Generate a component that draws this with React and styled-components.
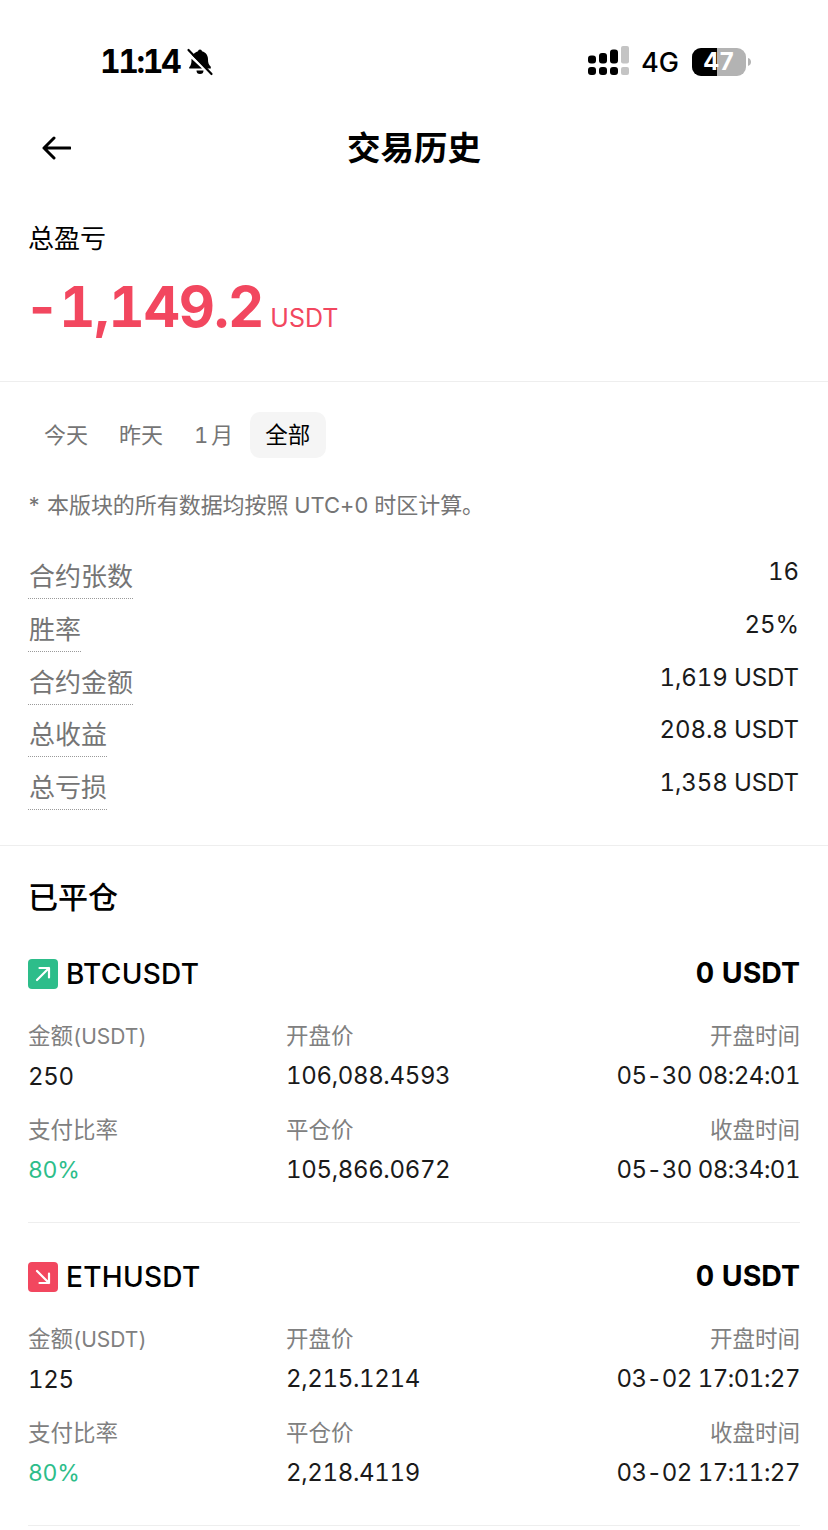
import React from 'react';
import styled, { createGlobalStyle } from 'styled-components';

const Global = createGlobalStyle`
  html, body {
    margin: 0;
    padding: 0;
    background: #fff;
  }
  body {
    font-family: "Inter", "Noto Sans CJK SC", sans-serif;
    font-variant-numeric: tabular-nums;
    color: #000;
  }
`;

const Page = styled.div`
  width: 828px;
  height: 1530px;
  overflow: hidden;
  background: #fff;
`;

const StatusBar = styled.div`
  height: 62px;
  padding-top: 40px;
  display: flex;
  align-items: flex-start;
  justify-content: space-between;
  padding-left: 100px;
  padding-right: 76px;
`;

const StatusLeft = styled.div`
  display: flex;
  align-items: center;
  gap: 6px;
  height: 44px;
`;

const Clock = styled.span`
  font-size: 32px;
  font-weight: 700;
  line-height: 44px;
  letter-spacing: -2.4px;
`;

const StatusRight = styled.div`
  display: flex;
  align-items: center;
  height: 44px;
`;

const Network = styled.span`
  font-size: 27px;
  font-weight: 500;
  margin: 0 13px 0 9px;
`;

const Header = styled.div`
  height: 70px;
  margin-top: 11px;
  display: grid;
  grid-template-columns: 1fr auto 1fr;
  align-items: center;
  padding: 0 39px;
`;

const Title = styled.div`
  font-size: 33.5px;
  font-weight: 700;
  line-height: 70px;
`;

const Summary = styled.div`
  padding: 38px 28px 0;
  height: 160px;
  border-bottom: 1px solid #eeeeee;
`;

const SummaryLabel = styled.div`
  font-size: 26px;
  line-height: 36px;
`;

const Pnl = styled.div`
  display: flex;
  align-items: baseline;
  gap: 7px;
  color: #f2475f;
  margin-top: 18px;
`;

const PnlValue = styled.span`
  font-size: 56px;
  font-weight: 700;
  line-height: 64px;
  letter-spacing: -1px;
  margin-left: -4px;
`;

const PnlUnit = styled.span`
  font-size: 25px;
`;

const Tabs = styled.div`
  display: flex;
  align-items: center;
  padding: 30px 0 0 30px;
`;

const Tab = styled.div`
  padding: 0 ${p => (p.$active ? 15.5 : 14)}px;
  height: 46px;
  margin-right: ${p => (p.$tight ? 4 : 3)}px;
  border-radius: 10px;
  font-size: ${p => (p.$active ? 22.5 : 22)}px;
  line-height: 46px;
  letter-spacing: ${p => (p.$tight ? -1.5 : 0)}px;
  color: ${p => (p.$active ? '#000' : '#757575')};
  background: ${p => (p.$active ? '#f5f5f5' : 'transparent')};
`;

const Note = styled.div`
  margin: 30px 28px 0 27px;
  font-size: 22px;
  line-height: 34px;
  letter-spacing: -0.06px;
  color: #757575;
`;

const Stats = styled.div`
  margin-top: 35px;
  padding: 0 29px 0 28px;
  display: flex;
  flex-direction: column;
  gap: 10px;
  height: 289px;
  box-sizing: border-box;
  border-bottom: 1px solid #eeeeee;
`;

const StatRow = styled.div`
  display: flex;
  justify-content: space-between;
  align-items: flex-start;
  height: 42.75px;
`;

const StatLabel = styled.span`
  font-size: 26px;
  line-height: 39px;
  padding: 0 0 2px 1px;
  color: #757575;
  border-bottom: 1px dotted #9a9a9a;
`;

const StatValue = styled.span`
  font-size: 24px;
  line-height: 30px;
  letter-spacing: -0.1px;
  color: #1a1a1a;
`;

const Closed = styled.div`
  padding: 0 28px;
`;

const ClosedTitle = styled.div`
  font-size: 30px;
  font-weight: 500;
  line-height: 40px;
  padding: 31px 0 3px;
`;

const Trade = styled.div`
  border-bottom: 1px solid #eeeeee;
  height: 303px;
  box-sizing: border-box;
  padding-top: 39px;
`;

const TradeHead = styled.div`
  display: flex;
  align-items: center;
  justify-content: space-between;
  height: 30px;
`;

const Pair = styled.div`
  display: flex;
  align-items: center;
  gap: 8px;
  font-size: 28px;
  font-weight: 500;
  letter-spacing: 0.3px;
`;

const Direction = styled.span`
  width: 30px;
  height: 30px;
  border-radius: 4px;
  background: ${p => (p.$up ? '#2dbd8a' : '#f2475f')};
  display: flex;
  align-items: center;
  justify-content: center;
`;

const Profit = styled.div`
  font-size: 28.5px;
  font-weight: 700;
  padding-bottom: 3px;
`;

const Grid = styled.div`
  display: grid;
  grid-template-columns: 258px 1fr 1fr;
  grid-auto-rows: 94px;
  margin-top: 30px;
`;

const Cell = styled.div`
  text-align: ${p => (p.$right ? 'right' : 'left')};
`;

const CellLabel = styled.div`
  font-size: 22.5px;
  line-height: 34px;
  color: #808080;
`;

const LabelUnit = styled.span`
  font-size: 21px;
`;

const CellValue = styled.div`
  font-size: ${p => (p.$green ? 23 : 24)}px;
  line-height: 34px;
  margin-top: 6px;
  letter-spacing: ${p => (p.$time ? -0.5 : -0.35)}px;
  color: ${p => (p.$green ? '#2dbd8a' : '#1a1a1a')};
`;

const MutedBell = () => (
  <svg width="30" height="32" viewBox="0 0 30 30">
    <path d="M15 2.500a2 2 0 0 1 2 1.800c4 1 6 4.300 6 8.200 0 3.500.8 5.300 2.800 7.300v1.700H21L7.300 8.500C8.500 6.900 10.700 4.800 13 4.300a2 2 0 0 1 2-1.800zM6.500 11.800l10.500 9.700H4.200v-1.200c1.600-1.700 2.300-3.800 2.300-7.300zM11.500 23.500h7a3.500 3.500 0 0 1-7 0z" fill="#000" />
    <path d="M3.500 3l23 24" stroke="#000" strokeWidth="2.200" strokeLinecap="round" />
  </svg>
);

const SignalDots = () => (
  <svg width="44" height="32" viewBox="0 0 44 32">
    <rect x="0" y="9.500" width="8" height="8" rx="3" fill="#000" />
    <rect x="11" y="7" width="8" height="10.500" rx="3" fill="#000" />
    <rect x="22" y="3.500" width="8" height="14" rx="3" fill="#000" />
    <rect x="33" y="0" width="8" height="17.500" rx="2" fill="#c4c4c4" />
    <rect x="0" y="21" width="8" height="8" rx="3" fill="#000" />
    <rect x="11" y="21" width="8" height="8" rx="3" fill="#000" />
    <rect x="22" y="21" width="8" height="8" rx="3" fill="#000" />
    <rect x="33" y="21" width="8" height="8" rx="2" fill="#c4c4c4" />
  </svg>
);

const BatteryWrap = styled.div`
  position: relative;
  width: 60px;
  height: 28px;
`;

const BatteryText = styled.span`
  position: absolute;
  left: 0;
  width: 54px;
  top: 0;
  text-align: center;
  font-size: 24px;
  font-weight: 700;
  line-height: 28px;
  color: #fff;
`;

const Battery = () => (
  <BatteryWrap>
    <svg width="60" height="28" viewBox="0 0 60 28">
      <rect x="0" y="0" width="54" height="28" rx="9" fill="#b3b3b3" />
      <path d="M9 0h16v28H9a9 9 0 0 1-9-9V9a9 9 0 0 1 9-9z" fill="#000" />
      <path d="M56 10c2 .6 3 2.200 3 4s-1 3.400-3 4z" fill="#b3b3b3" />
    </svg>
    <BatteryText>47</BatteryText>
  </BatteryWrap>
);

const BackArrow = () => (
  <svg width="32" height="32" viewBox="0 0 32 32" fill="none" stroke="#000" strokeWidth="3" strokeLinecap="round" strokeLinejoin="round">
    <path d="M31 16H5M15 6L5 16l10 10" />
  </svg>
);

const UpArrow = () => (
  <svg width="20" height="20" viewBox="0 0 20 20" fill="none" stroke="#fff" strokeWidth="2.200" strokeLinecap="round" strokeLinejoin="round">
    <path d="M4 16L16 4M6.500 4H16v9.500" />
  </svg>
);

const DownArrow = () => (
  <svg width="20" height="20" viewBox="0 0 20 20" fill="none" stroke="#fff" strokeWidth="2.200" strokeLinecap="round" strokeLinejoin="round">
    <path d="M4 4l12 12M16 6.500V16H6.500" />
  </svg>
);

const stats = [
  ['合约张数', '16'],
  ['胜率', '25%'],
  ['合约金额', '1,619 USDT'],
  ['总收益', '208.8 USDT'],
  ['总亏损', '1,358 USDT'],
];

const trades = [
  {
    pair: 'BTCUSDT', up: true, amount: '250', open: '106,088.4593', close: '105,866.0672',
    openAt: '05-30 08:24:01', closeAt: '05-30 08:34:01',
  },
  {
    pair: 'ETHUSDT', up: false, amount: '125', open: '2,215.1214', close: '2,218.4119',
    openAt: '03-02 17:01:27', closeAt: '03-02 17:11:27',
  },
];

export default function App() {
  return (
    <Page>
      <Global />
      <StatusBar>
        <StatusLeft>
          <Clock>11:14</Clock>
          <MutedBell />
        </StatusLeft>
        <StatusRight>
          <SignalDots />
          <Network>4G</Network>
          <Battery />
        </StatusRight>
      </StatusBar>
      <Header>
        <BackArrow />
        <Title>交易历史</Title>
      </Header>
      <Summary>
        <SummaryLabel>总盈亏</SummaryLabel>
        <Pnl>
          <PnlValue>-1,149.2</PnlValue>
          <PnlUnit>USDT</PnlUnit>
        </Pnl>
      </Summary>
      <Tabs>
        <Tab>今天</Tab>
        <Tab>昨天</Tab>
        <Tab $tight>1 月</Tab>
        <Tab $active>全部</Tab>
      </Tabs>
      <Note>* 本版块的所有数据均按照 UTC+0 时区计算。</Note>
      <Stats>
        {stats.map(([label, value]) => (
          <StatRow key={label}>
            <StatLabel>{label}</StatLabel>
            <StatValue>{value}</StatValue>
          </StatRow>
        ))}
      </Stats>
      <Closed>
        <ClosedTitle>已平仓</ClosedTitle>
        {trades.map(t => (
          <Trade key={t.pair}>
            <TradeHead>
              <Pair>
                <Direction $up={t.up}>{t.up ? <UpArrow /> : <DownArrow />}</Direction>
                {t.pair}
              </Pair>
              <Profit>0 USDT</Profit>
            </TradeHead>
            <Grid>
              <Cell>
                <CellLabel>金额<LabelUnit>(USDT)</LabelUnit></CellLabel>
                <CellValue>{t.amount}</CellValue>
              </Cell>
              <Cell>
                <CellLabel>开盘价</CellLabel>
                <CellValue>{t.open}</CellValue>
              </Cell>
              <Cell $right>
                <CellLabel>开盘时间</CellLabel>
                <CellValue $time>{t.openAt}</CellValue>
              </Cell>
              <Cell>
                <CellLabel>支付比率</CellLabel>
                <CellValue $green>80%</CellValue>
              </Cell>
              <Cell>
                <CellLabel>平仓价</CellLabel>
                <CellValue>{t.close}</CellValue>
              </Cell>
              <Cell $right>
                <CellLabel>收盘时间</CellLabel>
                <CellValue $time>{t.closeAt}</CellValue>
              </Cell>
            </Grid>
          </Trade>
        ))}
      </Closed>
    </Page>
  );
}
